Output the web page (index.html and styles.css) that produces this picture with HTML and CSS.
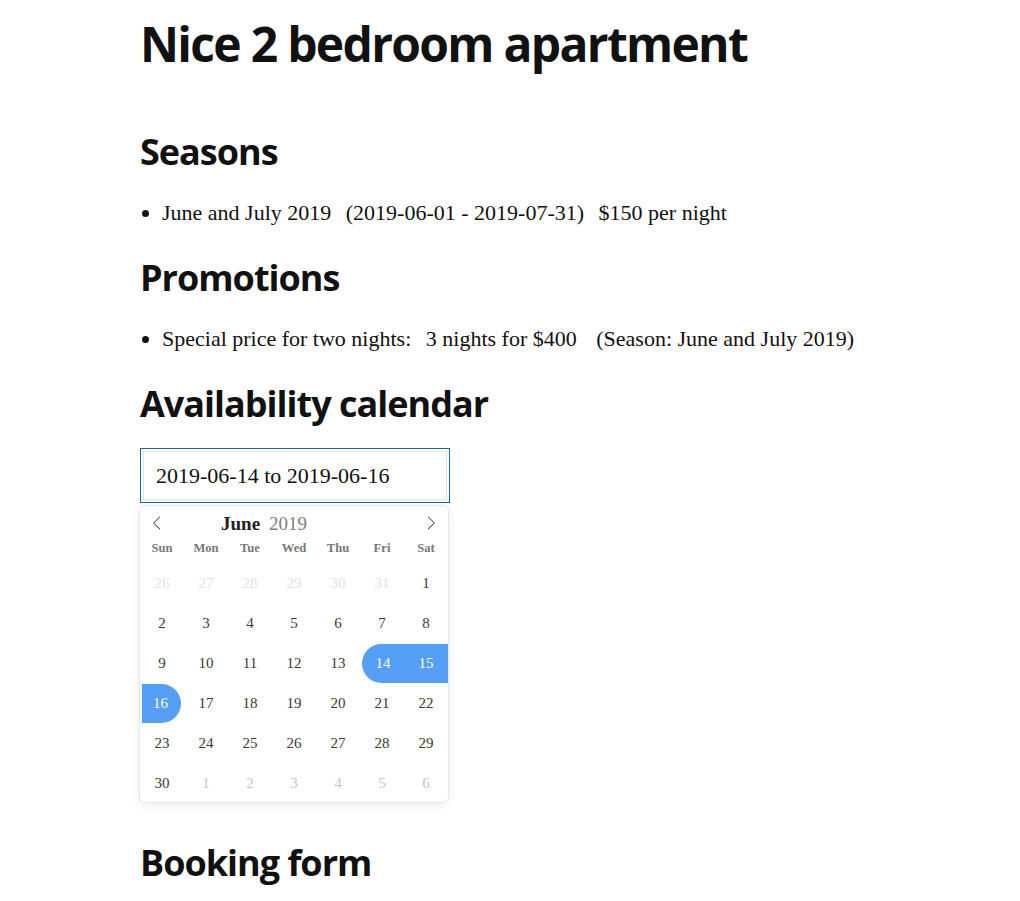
FILE: index.html
```html
<!DOCTYPE html>
<html lang="en">
<head>
<meta charset="utf-8">
<title>Nice 2 bedroom apartment</title>
<link rel="stylesheet" href="styles.css">
</head>
<body>
<div class="page">
  <h1 class="title">Nice 2 bedroom apartment</h1>

  <h2 class="section">Seasons</h2>
  <ul class="list">
    <li><span>June and July 2019</span> <span class="gap">(2019-06-01 - 2019-07-31)</span> <span class="gap">$150 per night</span></li>
  </ul>

  <h2 class="section">Promotions</h2>
  <ul class="list">
    <li><span>Special price for two nights:</span> <span class="gap">3 nights for $400</span> <span class="gap wide">(Season: June and July 2019)</span></li>
  </ul>

  <h2 class="section">Availability calendar</h2>
  <div class="picker">
    <div class="date-input">2019-06-14 to 2019-06-16</div>
    <div class="cal">
      <div class="cal-nav">
        <span class="arrow">
          <svg width="14" height="14" viewBox="0 0 17 17"><path d="M5.207 8.471l7.146 7.147-0.707 0.707-7.853-7.854 7.854-7.853 0.707 0.707-7.147 7.146z"/></svg>
        </span>
        <div class="cal-month"><span class="month">June</span><span class="year">2019</span></div>
        <span class="arrow">
          <svg width="14" height="14" viewBox="0 0 17 17"><path d="M13.207 8.472l-7.854 7.854-0.707-0.707 7.146-7.146-7.146-7.148 0.707-0.707 7.854 7.854z"/></svg>
        </span>
      </div>
      <div class="weekdays">
        <span>Sun</span><span>Mon</span><span>Tue</span><span>Wed</span><span>Thu</span><span>Fri</span><span>Sat</span>
      </div>
      <div class="days">
        <span class="day off">26</span><span class="day off">27</span><span class="day off">28</span><span class="day off">29</span><span class="day off">30</span><span class="day off">31</span><span class="day">1</span>
        <span class="day">2</span><span class="day">3</span><span class="day">4</span><span class="day">5</span><span class="day">6</span><span class="day">7</span><span class="day">8</span>
        <span class="day">9</span><span class="day">10</span><span class="day">11</span><span class="day">12</span><span class="day">13</span><span class="day sel start">14</span><span class="day sel mid">15</span>
        <span class="day sel end">16</span><span class="day">17</span><span class="day">18</span><span class="day">19</span><span class="day">20</span><span class="day">21</span><span class="day">22</span>
        <span class="day">23</span><span class="day">24</span><span class="day">25</span><span class="day">26</span><span class="day">27</span><span class="day">28</span><span class="day">29</span>
        <span class="day">30</span><span class="day next">1</span><span class="day next">2</span><span class="day next">3</span><span class="day next">4</span><span class="day next">5</span><span class="day next">6</span>
      </div>
    </div>
  </div>

  <h2 class="section booking">Booking form</h2>
</div>
</body>
</html>
```

FILE: styles.css
```css
html, body {
  margin: 0;
  padding: 0;
  background: #fff;
}

body {
  font-family: "Liberation Serif", "Times New Roman", serif;
  font-size: 22px;
  color: #111;
}

.page {
  width: 740px;
  margin: 0 auto;
  padding-top: 15px;
}

.title {
  font-family: "Open Sans", "Noto Sans", sans-serif;
  font-weight: 700;
  font-size: 48px;
  line-height: 58px;
  margin: 0;
  color: #111;
  letter-spacing: -1.7px;
}

.section {
  font-family: "Open Sans", "Noto Sans", sans-serif;
  font-weight: 700;
  font-size: 36px;
  line-height: 44px;
  margin: 0;
  color: #111;
  letter-spacing: -1px;
}

.title + .section {
  margin-top: 57px;
}

.list {
  margin: 26px 0 30px;
  padding-left: 22px;
  line-height: 26px;
}

.gap {
  margin-left: 9px;
}

.gap.wide {
  margin-left: 14px;
}

.picker {
  margin-top: 22px;
  width: 310px;
}

.date-input {
  box-sizing: border-box;
  width: 310px;
  height: 55px;
  border: 1px solid #17699b;
  box-shadow: inset 0 0 0 2px #fff, inset 0 0 0 3px #d3e7f1;
  padding: 0 15px;
  display: flex;
  align-items: center;
  font-size: 22px;
  color: #111;
}

.cal {
  margin-top: 3px;
  width: 308px;
  background: #fff;
  border-radius: 5px;
  box-shadow: 1px 0 0 #e6e6e6, -1px 0 0 #e6e6e6, 0 1px 0 #e6e6e6, 0 -1px 0 #e6e6e6, 0 3px 13px rgba(0, 0, 0, 0.08);
  overflow: hidden;
}

.cal-nav {
  height: 34px;
  display: flex;
  align-items: center;
  justify-content: space-between;
}

.arrow {
  display: flex;
  align-items: center;
  padding: 0 10px;
  height: 34px;
}

.arrow svg {
  fill: #3a3a3a;
}

.cal-month {
  flex: 1;
  display: flex;
  align-items: baseline;
  padding-left: 47px;
  font-size: 19px;
  line-height: 1;
  padding-top: 1px;
}

.month {
  font-weight: 700;
  color: #222;
}

.year {
  margin-left: 9px;
  color: #808080;
}

.weekdays {
  height: 24px;
  display: grid;
  grid-template-columns: repeat(7, 44px);
}

.weekdays span {
  text-align: center;
  font-size: 12.6px;
  font-weight: 700;
  line-height: 1;
  padding-top: 2px;
  color: #777;
}

.days {
  display: grid;
  grid-template-columns: repeat(7, 44px);
  grid-template-rows: repeat(5, 40px) 38px;
}

.day {
  height: 39px;
  line-height: 39px;
  text-align: center;
  font-size: 15px;
  color: #393939;
}

.day.off {
  color: #e2e2e2;
}

.day.next {
  color: #c4c4c4;
}

.day.sel {
  background: #569ff7;
  color: #fff;
}

.day.start {
  margin-left: 2px;
  border-radius: 20px 0 0 20px;
}

.day.end {
  margin-left: 2px;
  width: 39px;
  text-indent: -2px;
  border-radius: 0 20px 20px 0;
}

.booking {
  margin-top: 39px;
}
```
